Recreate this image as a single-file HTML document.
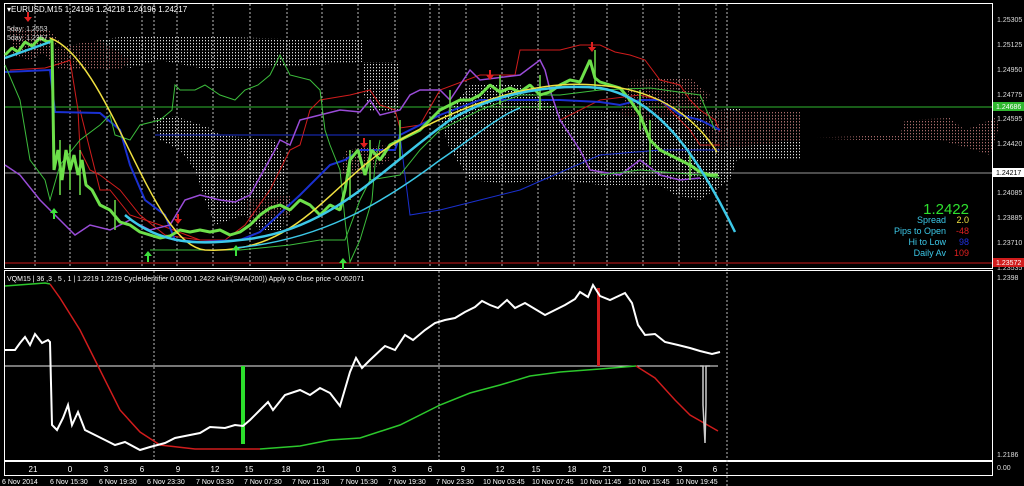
<!DOCTYPE html>
<html><head><meta charset="utf-8"><style>
html,body{margin:0;padding:0;background:#000;width:1024px;height:486px;overflow:hidden}
svg{display:block}
text{font-family:"Liberation Sans",sans-serif}
</style></head><body>
<svg width="1024" height="486" viewBox="0 0 1024 486" xmlns="http://www.w3.org/2000/svg">
<defs>
<pattern id="dw" width="3" height="3" patternUnits="userSpaceOnUse"><rect x="1" y="1" width="1" height="1.3" fill="#ddd"/></pattern>
<pattern id="dr" width="3" height="3" patternUnits="userSpaceOnUse"><rect x="1" y="1" width="1" height="1.3" fill="#a86a6a"/></pattern>
</defs>
<rect width="1024" height="486" fill="#000"/>
<rect x="4.5" y="3.5" width="988" height="265" fill="none" stroke="#fff"/>
<rect x="4.5" y="270.5" width="988" height="190" fill="none" stroke="#fff"/>
<rect x="4.5" y="461.5" width="988" height="14" fill="none" stroke="#fff"/>
<g stroke="#bbb" stroke-dasharray="2,2" stroke-width="1">
<line x1="35" y1="4" x2="35" y2="268"/><line x1="70" y1="4" x2="70" y2="268"/><line x1="107" y1="4" x2="107" y2="268"/><line x1="142" y1="4" x2="142" y2="268"/><line x1="154" y1="4" x2="154" y2="268"/><line x1="177" y1="4" x2="177" y2="268"/><line x1="213" y1="4" x2="213" y2="268"/><line x1="250" y1="4" x2="250" y2="268"/><line x1="287" y1="4" x2="287" y2="268"/><line x1="322" y1="4" x2="322" y2="268"/><line x1="358" y1="4" x2="358" y2="268"/><line x1="395" y1="4" x2="395" y2="268"/><line x1="430" y1="4" x2="430" y2="268"/><line x1="439" y1="4" x2="439" y2="268"/><line x1="466" y1="4" x2="466" y2="268"/><line x1="502" y1="4" x2="502" y2="268"/><line x1="538" y1="4" x2="538" y2="268"/><line x1="574" y1="4" x2="574" y2="268"/><line x1="607" y1="4" x2="607" y2="268"/><line x1="643" y1="4" x2="643" y2="268"/><line x1="679" y1="4" x2="679" y2="268"/><line x1="716" y1="4" x2="716" y2="268"/>
<line x1="727" y1="4" x2="727" y2="486"/>
<line x1="154" y1="271" x2="154" y2="460"/><line x1="439" y1="271" x2="439" y2="460"/>
</g>
<line x1="5" y1="107" x2="992" y2="107" stroke="#2fb82f"/>
<line x1="5" y1="173" x2="992" y2="173" stroke="#999"/>
<line x1="5" y1="263" x2="992" y2="263" stroke="#c81818"/>
<!-- clouds -->
<polygon points="95,40 130,36 200,36 260,38 362,40 362,62 300,66 250,68 200,68 160,60 130,68 110,62" fill="url(#dw)"/>
<polygon points="362,62 400,62 400,110 370,112 362,90" fill="url(#dw)"/>
<polygon points="153,118 175,116 210,128 220,135 250,138 275,140 285,160 285,200 283,230 260,230 245,215 215,225 205,200 195,170 180,150 160,140" fill="url(#dw)"/>
<polygon points="470,85 520,85 560,110 600,110 640,115 720,110 740,108 740,150 730,180 700,200 675,195 660,185 600,185 560,180 500,183 470,180 450,150 440,120" fill="url(#dw)"/>
<polygon points="720,115 800,115 800,160 720,160" fill="url(#dw)"/>
<polygon points="10,28 50,30 60,42 30,60 12,55" fill="url(#dr)"/>
<polygon points="40,50 100,40 130,60 120,70 60,70" fill="url(#dr)"/>
<polygon points="345,150 385,145 390,160 360,175 340,175" fill="url(#dr)"/>
<polygon points="630,80 690,78 710,95 700,110 650,120 620,115" fill="url(#dr)"/>
<polygon points="700,110 800,112 800,140 710,150" fill="url(#dr)"/>
<polygon points="800,138 900,135 905,120 950,118 965,130 995,118 1000,125 990,155 975,150 940,140 860,140" fill="url(#dr)"/>
<polygon points="245,200 290,195 290,215 250,220" fill="url(#dr)"/>
<polyline fill="none" stroke="#d01c1c" points="10,70 45,68 65,62 70,60 78,110 80,150 90,170 100,175 120,190 140,215 165,235 200,240 225,240 245,225 270,190 290,150 300,145 310,110 320,100 350,95 370,90 380,105 395,110 400,128 420,125 440,90 480,75 515,75 520,50 560,50 580,45 600,45 615,52 630,55 645,60 660,80 680,85 690,100 700,110 715,120 720,132"/>
<polyline fill="none" stroke="#d01c1c" points="80,110 90,150 100,190 110,190 130,215 160,225 200,240"/>
<polyline fill="none" stroke="#c01a1a" points="560,120 600,100 640,95 660,100 690,130 700,145 720,145"/>
<polyline fill="none" stroke="#1a30d0" stroke-width="2" points="5,72 50,70 55,112 100,113 120,130 130,165 145,200 165,215 175,240 200,242 240,240 260,232 300,195 330,165 345,160 360,150 395,150 400,135 440,115 480,100 520,100 560,100 600,102 620,105 640,100 660,100 680,115 700,120 720,130"/>
<polyline fill="none" stroke="#1a30d0" points="155,135 400,135 410,215 440,210 480,200 520,190 600,155 660,150 720,150"/>
<polyline fill="none" stroke="#9a4cd8" stroke-width="1.5" points="5,165 20,175 40,200 60,220 75,235 90,225 110,230 130,220 150,230 170,225 185,200 200,195 220,200 235,202 250,195 275,150 280,140 290,145 300,120 320,115 340,110 360,112 370,100 380,115 400,110 410,95 420,90 440,90 450,100 470,70 480,80 520,75 540,60 545,70 550,90 560,120 580,150 590,170 620,175 640,160 660,175 680,180 700,178"/>
<polyline fill="none" stroke="#3cbc3c" points="5,65 20,100 30,160 45,180 50,200 60,165 80,140 100,125 110,115 115,135 130,140 140,125 160,120 172,110 175,85 180,90 195,90 205,85 220,95 235,100 245,90 258,85 270,75 280,55 290,75 310,80 320,90 325,130 330,145 340,170 345,220 350,262 360,240 372,200 375,165 380,140"/>
<polyline fill="none" stroke="#3cbc3c" points="150,250 200,250 240,250 290,245 320,240 345,240 360,200 370,180 400,175 420,150 440,130 480,110 520,95 560,95 600,90 650,88 700,95 715,130"/>
<polyline fill="none" stroke="#3cbc3c" points="600,175 640,170 700,175 720,178"/>
<polyline fill="none" stroke="#6de04a" stroke-width="3" stroke-linejoin="bevel" points="5,55 12,48 18,52 25,42 32,46 40,38 48,42 52,40 54,170 58,150 62,180 66,150 70,170 74,155 78,175 82,160 86,185 92,190 100,205 110,210 120,222 130,225 140,232 150,235 160,238 170,236 180,230 190,232 200,230 210,232 220,230 230,235 240,232 250,225 260,215 270,208 280,205 290,210 300,200 310,205 320,215 330,205 340,210 345,190 350,160 358,150 365,175 372,150 380,160 390,145 400,140 410,135 420,130 430,120 440,110 450,105 460,100 470,100 480,95 490,85 500,92 510,88 520,92 530,85 540,95 550,92 560,85 570,80 580,82 590,60 595,78 600,82 610,85 620,88 630,100 640,115 650,140 660,150 670,155 680,160 690,165 700,172 710,175 718,175"/>
<g stroke="#6de04a" stroke-width="1.5">
<line x1="60" y1="140" x2="60" y2="195"/><line x1="70" y1="145" x2="70" y2="190"/><line x1="80" y1="150" x2="80" y2="195"/><line x1="115" y1="200" x2="115" y2="230"/><line x1="350" y1="150" x2="350" y2="200"/><line x1="370" y1="140" x2="370" y2="180"/><line x1="400" y1="120" x2="400" y2="160"/><line x1="450" y1="90" x2="450" y2="120"/><line x1="500" y1="75" x2="500" y2="105"/><line x1="540" y1="75" x2="540" y2="110"/><line x1="595" y1="50" x2="595" y2="90"/><line x1="640" y1="90" x2="640" y2="130"/><line x1="650" y1="120" x2="650" y2="165"/><line x1="690" y1="155" x2="690" y2="180"/>
</g>
<path d="M50,38 C110,60 150,245 205,250 C300,255 330,180 400,140 C470,100 540,80 595,85 C650,88 690,110 717,152" fill="none" stroke="#f0e040" stroke-width="1.5"/>
<path d="M5,58 L50,42" stroke="#3cc8e8" stroke-width="2.5" fill="none"/>
<path d="M125,215 C160,245 200,245 240,240 C330,232 380,170 450,120 C500,90 560,84 600,88 C660,98 700,160 735,232" fill="none" stroke="#3cc8e8" stroke-width="2.5"/>
<path d="M235,248 C320,240 380,205 440,160 C470,140 500,115 520,108" fill="none" stroke="#3cc8e8" stroke-width="1.5"/>
<g fill="#3de03d"><path d="M54,208 l-4,5 h3 v6 h2 v-6 h3z"/><path d="M148,251 l-4,5 h3 v6 h2 v-6 h3z"/><path d="M236,245 l-4,5 h3 v6 h2 v-6 h3z"/><path d="M343,258 l-4,5 h3 v6 h2 v-6 h3z"/></g>
<g fill="#e02020"><path d="M28,22 l-4,-5 h3 v-5 h2 v5 h3z"/><path d="M178,224 l-4,-5 h3 v-5 h2 v5 h3z"/><path d="M364,148 l-4,-5 h3 v-5 h2 v5 h3z"/><path d="M490,80 l-4,-5 h3 v-5 h2 v5 h3z"/><path d="M592,52 l-4,-5 h3 v-5 h2 v5 h3z"/></g>
<text x="7" y="12" fill="#fff" font-size="8">▾EURUSD,M15  1.24196 1.24218 1.24196 1.24217</text>
<text x="7" y="31" fill="#ddd" font-size="7">5day: 1.2553</text>
<text x="7" y="40" fill="#ddd" font-size="7">5day: 1.2357</text>
<text x="969" y="214" fill="#2ee02e" font-size="15" text-anchor="end">1.2422</text>
<g font-size="9" text-anchor="end"><text x="946" y="223" fill="#3cc8e8">Spread</text><text x="946" y="234" fill="#3cc8e8">Pips to Open</text><text x="946" y="245" fill="#3cc8e8">Hi to Low</text><text x="946" y="256" fill="#3cc8e8">Daily Av</text>
<text x="969" y="223" fill="#f0e040">2.0</text><text x="969" y="234" fill="#e02020">-48</text><text x="969" y="245" fill="#2030e0">98</text><text x="969" y="256" fill="#e02020">109</text></g>
<g font-size="7" fill="#ddd"><text x="997" y="22">1.25305</text><text x="997" y="47">1.25125</text><text x="997" y="72">1.24950</text><text x="997" y="97">1.24775</text><text x="997" y="121">1.24595</text><text x="997" y="146">1.24420</text><text x="997" y="195">1.24085</text><text x="997" y="220">1.23885</text><text x="997" y="245">1.23710</text><text x="997" y="270">1.23535</text><text x="997" y="280">1.2398</text><text x="997" y="457">1.2186</text><text x="997" y="470">0.00</text></g>
<rect x="993" y="102" width="31" height="9" fill="#2fb82f"/><text x="996" y="109" font-size="7" fill="#fff">1.24686</text>
<rect x="993" y="168" width="31" height="9" fill="#fff"/><text x="996" y="175" font-size="7" fill="#000">1.24217</text>
<rect x="993" y="258" width="31" height="9" fill="#d01c1c"/><text x="996" y="265" font-size="7" fill="#fff">1.23572</text>
<text x="7" y="281" fill="#fff" font-size="7">VQM15 | 36 ,3 , 5 , 1  |  1.2219 1.2219  CycleIdentifier 0.0000 1.2422  Kairi(SMA(200)) Apply to Close price -0.052071</text>
<line x1="5" y1="366" x2="718" y2="366" stroke="#eee"/>
<polyline fill="none" stroke="#2cc82c" stroke-width="1.5" points="5,286 45,283 50,284"/>
<polyline fill="none" stroke="#d01c1c" stroke-width="1.5" points="50,284 60,298 80,330 100,370 120,410 140,432 160,445 195,449 260,449"/>
<polyline fill="none" stroke="#2cc82c" stroke-width="1.5" points="260,449 300,446 330,440 360,438 400,425 440,405 470,393 500,385 530,376 560,372 600,369 636,366"/>
<polyline fill="none" stroke="#d01c1c" stroke-width="1.5" points="636,366 655,378 675,400 690,415 718,431"/>
<rect x="241" y="366" width="4" height="78" fill="#2ce02c"/>
<rect x="597" y="288" width="3" height="78" fill="#d01c1c"/>
<polyline fill="none" stroke="#ccc" stroke-width="1.5" points="700,366 703,366 703,405 705,443 706,405 706,366 710,366"/>
<polyline fill="none" stroke="#fff" stroke-width="2" points="5,350 15,350 20,343 25,337 30,345 35,334 42,343 48,340 50,342 52,425 57,430 63,418 68,405 72,425 78,412 85,430 95,435 105,440 115,445 125,442 140,450 150,447 165,443 175,438 185,436 200,433 210,427 225,428 235,425 243,426 250,420 260,410 268,402 273,410 285,395 300,390 310,395 320,388 330,393 340,406 350,372 356,358 362,368 370,360 385,346 395,350 405,335 413,340 425,330 435,323 445,320 455,318 465,312 475,307 482,301 490,305 498,308 507,300 515,308 525,303 545,315 555,310 565,305 575,299 580,292 588,297 593,285 600,296 610,300 625,293 632,303 638,325 645,335 655,334 665,342 678,345 690,348 700,351 712,354 720,352"/>
<g font-size="8" fill="#fff" text-anchor="middle"><text x="33" y="472">21</text><text x="70" y="472">0</text><text x="106" y="472">3</text><text x="142" y="472">6</text><text x="178" y="472">9</text><text x="215" y="472">12</text><text x="249" y="472">15</text><text x="286" y="472">18</text><text x="321" y="472">21</text><text x="358" y="472">0</text><text x="394" y="472">3</text><text x="430" y="472">6</text><text x="463" y="472">9</text><text x="500" y="472">12</text><text x="536" y="472">15</text><text x="572" y="472">18</text><text x="607" y="472">21</text><text x="644" y="472">0</text><text x="680" y="472">3</text><text x="715" y="472">6</text></g>
<g font-size="7" fill="#fff"><text x="2" y="484">6 Nov 2014</text><text x="50" y="484">6 Nov 15:30</text><text x="99" y="484">6 Nov 19:30</text><text x="147" y="484">6 Nov 23:30</text><text x="196" y="484">7 Nov 03:30</text><text x="244" y="484">7 Nov 07:30</text><text x="292" y="484">7 Nov 11:30</text><text x="340" y="484">7 Nov 15:30</text><text x="388" y="484">7 Nov 19:30</text><text x="436" y="484">7 Nov 23:30</text><text x="483" y="484">10 Nov 03:45</text><text x="532" y="484">10 Nov 07:45</text><text x="580" y="484">10 Nov 11:45</text><text x="628" y="484">10 Nov 15:45</text><text x="676" y="484">10 Nov 19:45</text></g>
</svg>
</body></html>
